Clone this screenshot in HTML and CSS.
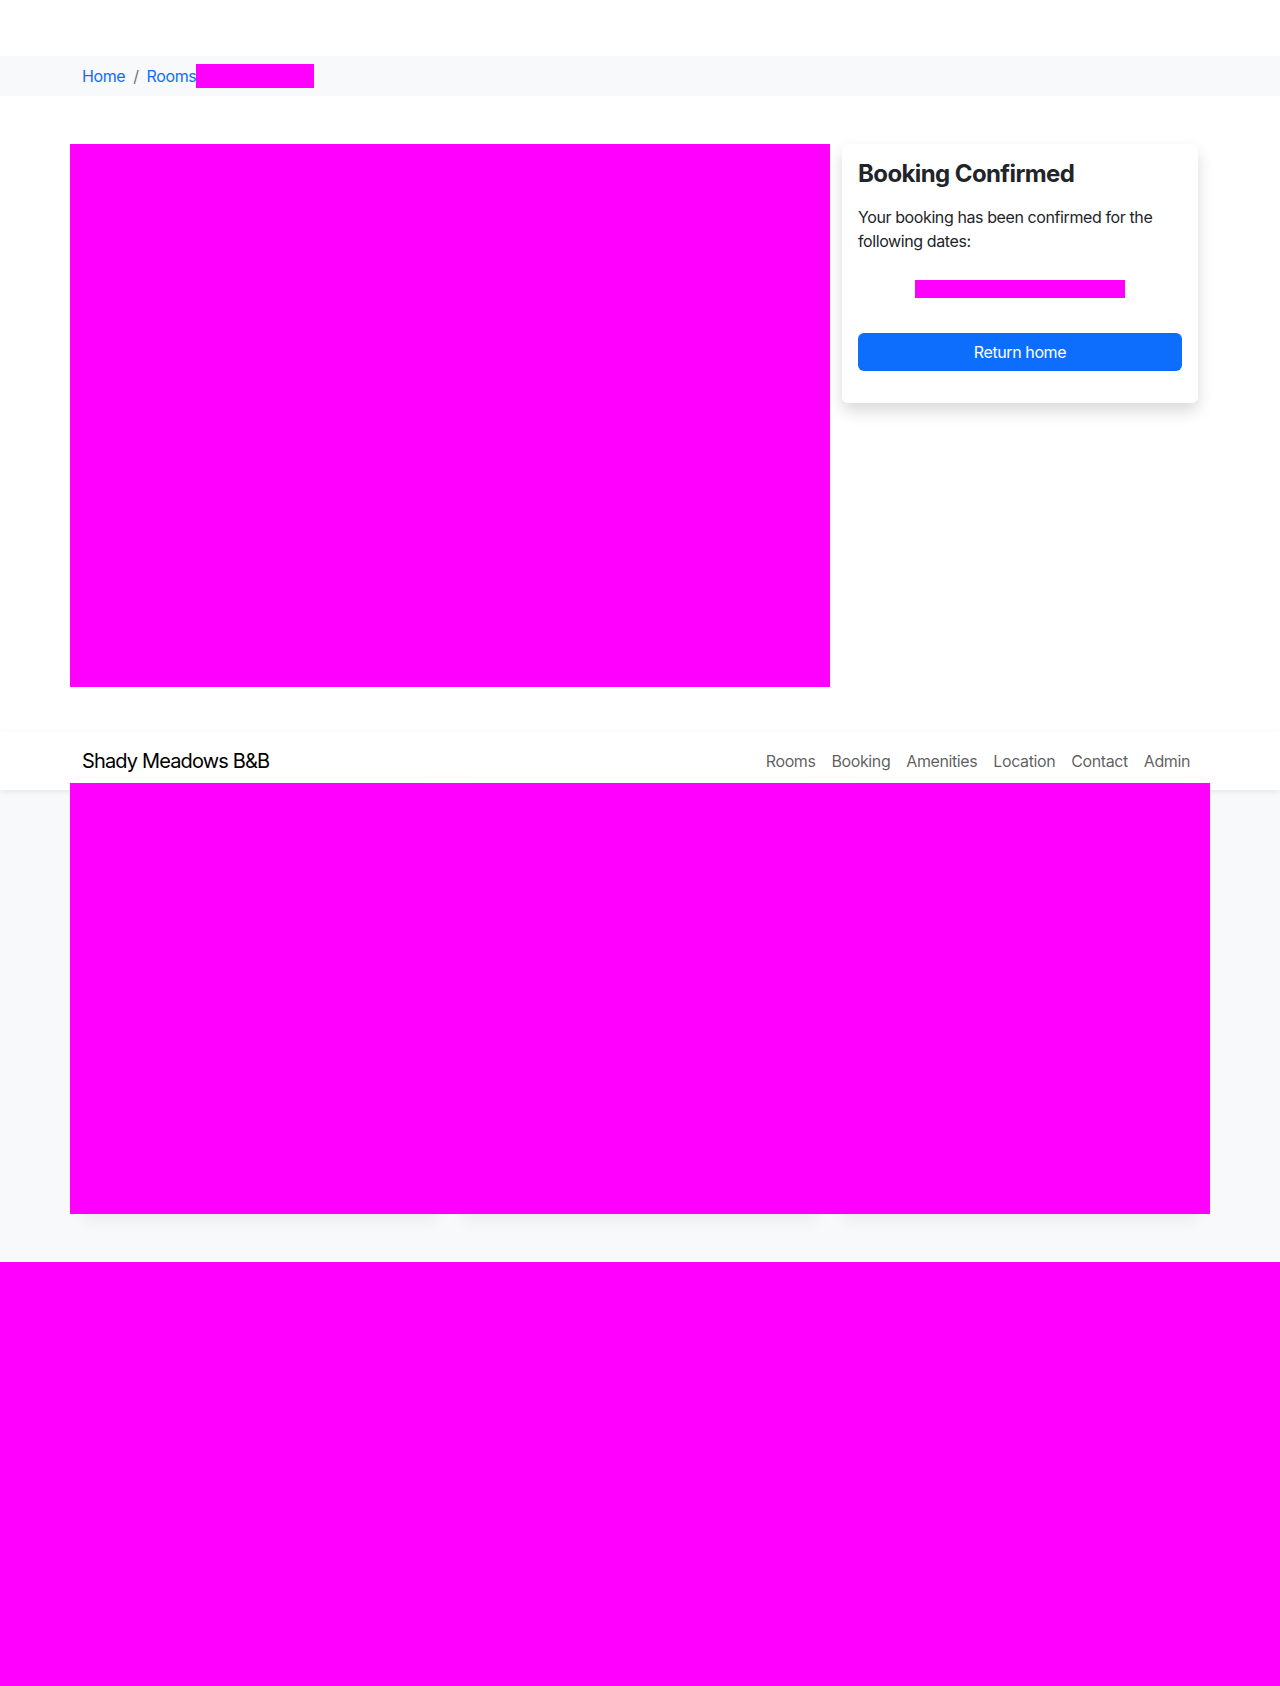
FILE: index.html
```html
<!DOCTYPE html>
<html lang="en">
<head>
  <meta charset="UTF-8">
  <meta name="viewport" content="width=device-width, initial-scale=1.0">
  <title>Shady Meadows B&amp;B - Booking Confirmed</title>
  <link rel="stylesheet" href="styles.css">
</head>
<body>

<div class="top-space"></div>

<nav class="crumbs">
  <div class="container">
    <ol class="crumb-list">
      <li><a href="#">Home</a></li>
      <li class="sep">/</li>
      <li><a href="#">Rooms</a></li>
      <li class="crumb-current"></li>
    </ol>
  </div>
</nav>

<section class="confirm">
  <div class="container confirm-row">
    <div class="room-photo"></div>
    <div class="side-col">
      <div class="confirm-card">
        <h3>Booking Confirmed</h3>
        <p>Your booking has been confirmed for the following dates:</p>
        <div class="dates"><span class="dates-box"></span></div>
        <a class="btn-primary" href="#">Return home</a>
      </div>
    </div>
  </div>
</section>

<header class="navbar">
  <div class="container nav-inner">
    <a class="brand" href="#">Shady Meadows B&amp;B</a>
    <ul class="nav-links">
      <li><a href="#">Rooms</a></li>
      <li><a href="#">Booking</a></li>
      <li><a href="#">Amenities</a></li>
      <li><a href="#">Location</a></li>
      <li><a href="#">Contact</a></li>
      <li><a href="#">Admin</a></li>
    </ul>
  </div>
</header>

<section class="rooms">
  <div class="container rooms-wrap">
    <div class="room-grid">
      <div class="room-card"></div>
      <div class="room-card"></div>
      <div class="room-card"></div>
    </div>
    <!-- masked area over the room cards -->
    <div class="rooms-cover"></div>
  </div>
</section>

<footer class="footer"></footer>

</body>
</html>
```

FILE: styles.css
```css
body { margin: 0; padding: 0; font-family: Inter, "Noto Sans", sans-serif; font-size: 16px; line-height: 1.5; letter-spacing: -0.4px; color: #212529; background: #fff; }
a { text-decoration: none; }
.container { width: 1140px; margin: 0 auto; box-sizing: border-box; }

.top-space { height: 56px; }

.crumbs { background-color: #f8f9fa; height: 40px; }
.crumb-list { list-style: none; margin: 0; padding: 0 12px; height: 40px; display: flex; align-items: center; }
.crumb-list a { color: #0d6efd; }
.crumb-list .sep { color: #6c757d; padding: 0 8px; }
.crumb-current { width: 118px; height: 24px; background: #ff00ff; }

.confirm { padding-top: 48px; }
.confirm-row { display: flex; }
.room-photo { width: 760px; height: 543px; background: #ff00ff; }
.side-col { width: 380px; padding: 0 12px; box-sizing: border-box; }
.confirm-card { background: #fff; border-radius: 6px; box-shadow: 0 .5rem 1rem rgba(0, 0, 0, .15); padding: 16px 16px 32px; }
.confirm-card h3 { margin: 0 0 16px; font-size: 24px; line-height: 1.2; font-weight: 700; letter-spacing: -0.6px; }
.confirm-card p { margin: 0 0 27px; }
.dates { display: flex; justify-content: center; margin-bottom: 35px; }
.dates-box { width: 210px; height: 18px; background: #ff00ff; }
.btn-primary { display: block; height: 38px; line-height: 38px; text-align: center; color: #fff; background-color: #0d6efd; border-radius: 6px; }

.navbar { position: relative; z-index: 1; margin-top: 45px; background: #fff; box-shadow: 0 .125rem .35rem rgba(0, 0, 0, .08); }
.nav-inner { height: 58px; display: flex; align-items: center; justify-content: space-between; padding: 0 12px; }
.brand { font-size: 20px; letter-spacing: -0.85px; color: #000; }
.nav-links { list-style: none; margin: 0; padding: 0; display: flex; }
.nav-links a { display: block; padding: 0 8px; color: rgba(0, 0, 0, .65); }

.rooms { background-color: #f8f9fa; padding-bottom: 48px; }
.rooms-wrap { position: relative; z-index: 2; margin-top: -7px; }
.room-grid { display: grid; grid-template-columns: repeat(3, 1fr); gap: 24px; padding: 0 12px; }
.room-card { height: 431px; background: #fff; border-radius: 6px; box-shadow: 0 .5rem 1rem rgba(0, 0, 0, .05); }
.rooms-cover { position: absolute; top: 0; left: 0; right: 0; bottom: 0; background: #ff00ff; }

.footer { height: 424px; background: #ff00ff; }
```
